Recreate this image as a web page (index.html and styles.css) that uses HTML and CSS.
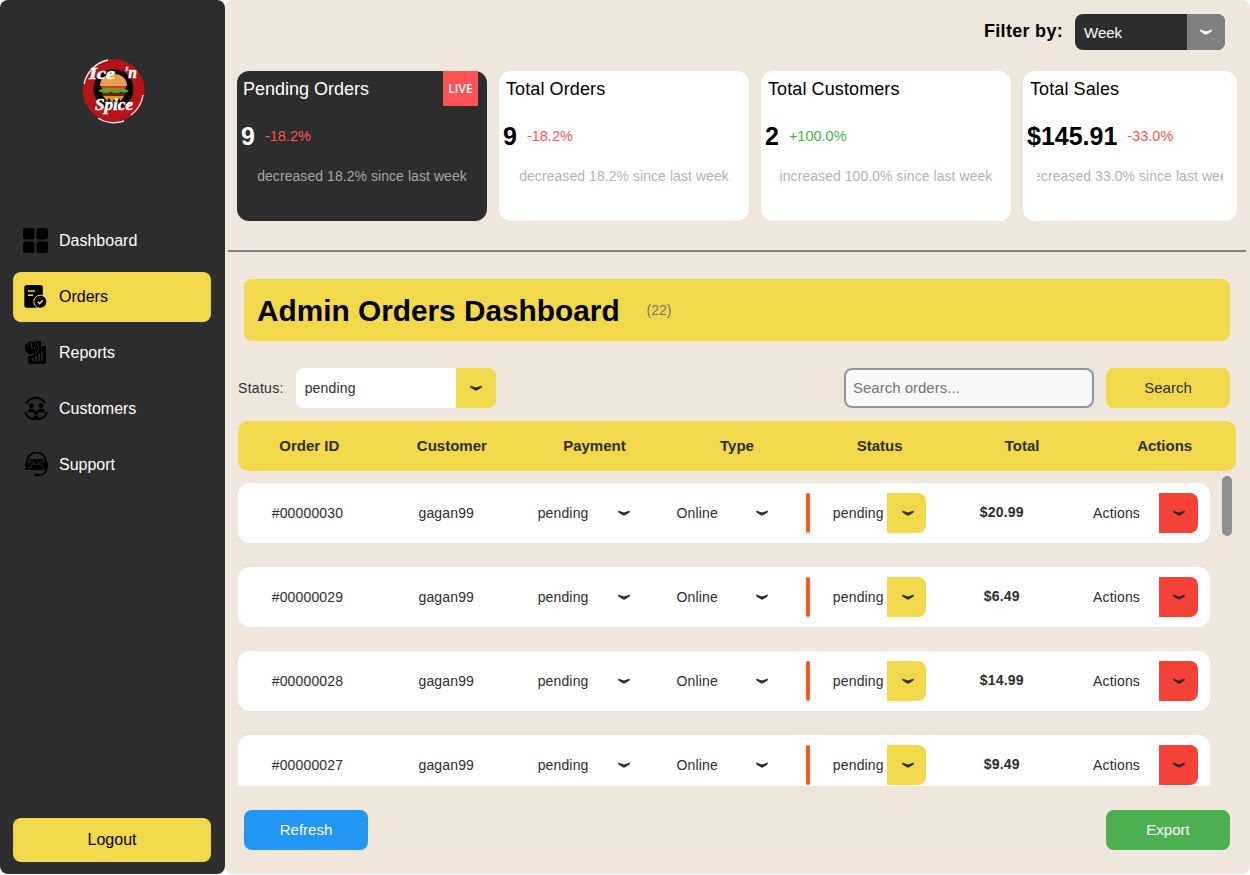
FILE: index.html
```html
<!DOCTYPE html>
<html lang="en">

<head>
  <meta charset="UTF-8">
  <title>Admin Orders Dashboard</title>
  <link rel="stylesheet" href="styles.css">
</head>

<body>
  <svg class="svg-defs" width="0" height="0">
    <symbol id="chevron" viewBox="0 0 12 6">
      <path d="M0 .4 6 2.400 12 .4 11.600 2.400 6.800 5.600H5.200L.4 2.400Z" />
    </symbol>
  </svg>

  <div class="app">
    <!-- Sidebar -->
    <aside class="sidebar">
      <div class="logo">
        <svg width="70" height="70" viewBox="79 55 70 70">
          <circle cx="113.7" cy="90.3" r="31" fill="#b81416" />
          <path d="M131 115a31 31 0 0 0 12-20M98 118a31 31 0 0 0 26 3M84 84a31 31 0 0 1 24-24" fill="none" stroke="#f3e4e4" stroke-width="1.400" />
          <circle cx="113.5" cy="89" r="20" fill="#050505" />
          <path d="M100 86c0-8 6-12 13.500-12S127 78 127 86Z" fill="#e8a04c" />
          <rect x="101" y="86" width="25" height="2" rx="1" fill="#d8342a" />
          <path d="M98 91l5-3h21l5 3-4 2-4-1-5 2-5-2-5 2Z" fill="#6e9a2c" />
          <rect x="102" y="93" width="23" height="3" rx="1" fill="#5a2a18" />
          <path d="M103 96h21l-3 5-2-3-2 5-3-4-2 4-3-5-2 3Z" fill="#e8901c" />
          <text x="89" y="79" class="logo-text" textLength="26" lengthAdjust="spacingAndGlyphs">Ice</text>
          <text x="124" y="78" class="logo-text" textLength="13" lengthAdjust="spacingAndGlyphs">'n</text>
          <text x="95" y="110" class="logo-text" textLength="38" lengthAdjust="spacingAndGlyphs">Spice</text>
        </svg>
      </div>

      <nav class="nav">
        <a class="nav-item" href="#">
          <svg class="nav-icon" width="26" height="26" viewBox="0 0 26 26">
            <rect x="0" y="0" width="11.500" height="11.500" rx="2.500" />
            <rect x="13.500" y="0" width="11.500" height="11.500" rx="2.500" />
            <rect x="0" y="13.500" width="11.500" height="11.500" rx="2.500" />
            <rect x="13.500" y="13.500" width="11.500" height="11.500" rx="2.500" />
          </svg>
          Dashboard
        </a>
        <a class="nav-item active" href="#">
          <svg class="nav-icon" width="26" height="26" viewBox="0 0 26 26">
            <rect x="1.300" y="1" width="18.500" height="22.700" rx="2.500" />
            <rect x="5" y="6.300" width="7" height="1.500" fill="#f2d84b" />
            <rect x="5" y="10.500" width="5" height="1.500" fill="#f2d84b" />
            <circle cx="17.300" cy="17.700" r="6.500" fill="#000" stroke="#f2d84b" stroke-width="1" />
            <path d="M14.800 17.700l1.900 1.900 3.100-3.300" fill="none" stroke="#f2d84b" stroke-width="1.500" />
          </svg>
          Orders
        </a>
        <a class="nav-item" href="#">
          <svg class="nav-icon" width="26" height="26" viewBox="0 0 26 26">
            <path d="M9 1h9l5 5v16a2 2 0 0 1-2 2H7a2 2 0 0 1-2-2v-6h4Z" />
            <path d="M18 1v5h5Z" fill="#2d2d2d" />
            <circle cx="8.500" cy="8" r="7" fill="#000" stroke="#2d2d2d" stroke-width="1" />
            <path d="M8.500 3v5h5" fill="none" stroke="#2d2d2d" stroke-width="1" />
            <path d="M10 21v-3M13 21v-5M16 21v-7M19 21v-9" stroke="#2d2d2d" stroke-width="1.500" />
          </svg>
          Reports
        </a>
        <a class="nav-item" href="#">
          <svg class="nav-icon" width="26" height="26" viewBox="0 0 26 26">
            <path d="M3 8a11 11 0 0 1 19-1M24 16a11 11 0 0 1-7 7M10 23a11 11 0 0 1-8-7" fill="none" stroke="#000"
              stroke-width="2" />
            <circle cx="8.500" cy="9.500" r="2.500" />
            <circle cx="18" cy="9.500" r="2.500" />
            <path d="M4.500 16.500c0-3 1.500-4 4-4s3.500 1 3.500 4ZM14.500 16.500c0-3 1-4 3.500-4s4 1 4 4Z" />
            <circle cx="13.200" cy="17" r="2.400" />
            <path d="M9.500 24c0-3 1.500-4.300 3.700-4.300s3.800 1.300 3.800 4.300Z" />
          </svg>
          Customers
        </a>
        <a class="nav-item" href="#">
          <svg class="nav-icon" width="26" height="26" viewBox="0 0 26 26">
            <path d="M4 12V10a9.500 9.500 0 0 1 19 0v2" fill="none" stroke="#000" stroke-width="2" />
            <rect x="2" y="10" width="4" height="8" rx="2" />
            <rect x="21" y="10" width="4" height="8" rx="2" />
            <path d="M6 7h15v11H6Z" />
            <path d="M6 8l7.500 5L21 8M6 17l5-5.500M21 17l-5-5.500" fill="none" stroke="#2d2d2d" stroke-width="1" />
            <path d="M23 18c0 4-3 5-8 5" fill="none" stroke="#000" stroke-width="1.600" />
            <rect x="11" y="21.500" width="5" height="2.800" rx="1.400" />
          </svg>
          Support
        </a>
      </nav>

      <button class="logout-btn">Logout</button>
    </aside>

    <main class="main">
      <div class="filter-bar">
        <span class="filter-label">Filter by:</span>
        <div class="picker picker-dark">
          <span class="picker-text">Week</span>
          <span class="picker-arrow"><svg class="chevron"><use href="#chevron" /></svg></span>
        </div>
      </div>

      <!-- Stat cards -->
      <section class="cards">
        <div class="card card-live">
          <span class="live-badge">LIVE</span>
          <div class="card-title">Pending Orders</div>
          <div class="card-value-row"><span class="card-value">9</span><span class="change down">-18.2%</span></div>
          <div class="card-desc"><span>decreased 18.2% since last week</span></div>
        </div>
        <div class="card">
          <div class="card-title">Total Orders</div>
          <div class="card-value-row"><span class="card-value">9</span><span class="change down">-18.2%</span></div>
          <div class="card-desc"><span>decreased 18.2% since last week</span></div>
        </div>
        <div class="card">
          <div class="card-title">Total Customers</div>
          <div class="card-value-row"><span class="card-value">2</span><span class="change up">+100.0%</span></div>
          <div class="card-desc"><span>increased 100.0% since last week</span></div>
        </div>
        <div class="card card-last">
          <div class="card-title">Total Sales</div>
          <div class="card-value-row"><span class="card-value">$145.91</span><span class="change down">-33.0%</span></div>
          <div class="card-desc"><span>decreased 33.0% since last week</span></div>
        </div>
      </section>

      <hr class="divider">

      <div class="banner">
        <h1>Admin Orders Dashboard</h1>
        <span class="banner-count">(22)</span>
      </div>

      <div class="toolbar">
        <span class="toolbar-label">Status:</span>
        <div class="picker picker-status">
          <span class="picker-text">pending</span>
          <span class="picker-arrow"><svg class="chevron"><use href="#chevron" /></svg></span>
        </div>
        <input class="search-input" type="text" placeholder="Search orders...">
        <button class="btn btn-yellow">Search</button>
      </div>

      <!-- Orders table -->
      <div class="table-head">
        <div>Order ID</div>
        <div>Customer</div>
        <div>Payment</div>
        <div>Type</div>
        <div>Status</div>
        <div>Total</div>
        <div>Actions</div>
      </div>

      <div class="table-scroll">
        <div class="scroll-thumb"></div>
        <div class="table-body">
          <div class="order-row">
            <div class="cell">#00000030</div>
            <div class="cell">gagan99</div>
            <div class="cell"><div class="row-picker"><span>pending</span><span class="row-arrow"><svg class="chevron"><use href="#chevron" /></svg></span></div></div>
            <div class="cell"><div class="row-picker"><span>Online</span><span class="row-arrow"><svg class="chevron"><use href="#chevron" /></svg></span></div></div>
            <div class="cell"><div class="row-picker status-picker"><span>pending</span><span class="row-arrow"><svg class="chevron"><use href="#chevron" /></svg></span></div></div>
            <div class="cell total">$20.99</div>
            <div class="cell"><div class="row-picker action-picker"><span>Actions</span><span class="row-arrow"><svg class="chevron"><use href="#chevron" /></svg></span></div></div>
          </div>
          <div class="order-row">
            <div class="cell">#00000029</div>
            <div class="cell">gagan99</div>
            <div class="cell"><div class="row-picker"><span>pending</span><span class="row-arrow"><svg class="chevron"><use href="#chevron" /></svg></span></div></div>
            <div class="cell"><div class="row-picker"><span>Online</span><span class="row-arrow"><svg class="chevron"><use href="#chevron" /></svg></span></div></div>
            <div class="cell"><div class="row-picker status-picker"><span>pending</span><span class="row-arrow"><svg class="chevron"><use href="#chevron" /></svg></span></div></div>
            <div class="cell total">$6.49</div>
            <div class="cell"><div class="row-picker action-picker"><span>Actions</span><span class="row-arrow"><svg class="chevron"><use href="#chevron" /></svg></span></div></div>
          </div>
          <div class="order-row">
            <div class="cell">#00000028</div>
            <div class="cell">gagan99</div>
            <div class="cell"><div class="row-picker"><span>pending</span><span class="row-arrow"><svg class="chevron"><use href="#chevron" /></svg></span></div></div>
            <div class="cell"><div class="row-picker"><span>Online</span><span class="row-arrow"><svg class="chevron"><use href="#chevron" /></svg></span></div></div>
            <div class="cell"><div class="row-picker status-picker"><span>pending</span><span class="row-arrow"><svg class="chevron"><use href="#chevron" /></svg></span></div></div>
            <div class="cell total">$14.99</div>
            <div class="cell"><div class="row-picker action-picker"><span>Actions</span><span class="row-arrow"><svg class="chevron"><use href="#chevron" /></svg></span></div></div>
          </div>
          <div class="order-row">
            <div class="cell">#00000027</div>
            <div class="cell">gagan99</div>
            <div class="cell"><div class="row-picker"><span>pending</span><span class="row-arrow"><svg class="chevron"><use href="#chevron" /></svg></span></div></div>
            <div class="cell"><div class="row-picker"><span>Online</span><span class="row-arrow"><svg class="chevron"><use href="#chevron" /></svg></span></div></div>
            <div class="cell"><div class="row-picker status-picker"><span>pending</span><span class="row-arrow"><svg class="chevron"><use href="#chevron" /></svg></span></div></div>
            <div class="cell total">$9.49</div>
            <div class="cell"><div class="row-picker action-picker"><span>Actions</span><span class="row-arrow"><svg class="chevron"><use href="#chevron" /></svg></span></div></div>
          </div>
        </div>
      </div>

      <div class="footer-actions">
        <button class="btn btn-blue">Refresh</button>
        <button class="btn btn-green">Export</button>
      </div>
    </main>
  </div>
</body>

</html>
```

FILE: styles.css
```css
* {
  box-sizing: border-box;
}

body {
  font-family: "Liberation Sans", Arial, sans-serif;
  margin: 0;
  padding: 0;
  background-color: #fff;
  color: #2d2d2d;
  overflow: hidden;
}

.svg-defs {
  position: absolute;
}

.app {
  display: flex;
  height: 874px;
}

/* Sidebar */
.sidebar {
  width: 225px;
  flex: none;
  display: flex;
  flex-direction: column;
  background-color: #2d2d2d;
  border-radius: 8px;
  padding: 0 13px 12px 13px;
}

.logo {
  height: 216px;
  padding: 55px 0 0 66px;
}

.logo-text {
  font-family: "Liberation Serif", serif;
  font-size: 16px;
  font-weight: bold;
  font-style: italic;
  fill: #fff;
  stroke: #fff;
  stroke-width: .5px;
}

.nav {
  display: flex;
  flex-direction: column;
  gap: 6px;
  flex: 1;
}

.nav-item {
  display: flex;
  align-items: center;
  gap: 10px;
  height: 50px;
  width: 198px;
  padding-left: 10px;
  border-radius: 8px;
  color: #fff;
  font-size: 16px;
  text-decoration: none;
}

.nav-item.active {
  background-color: #f2d84b;
  color: #000;
}

.logout-btn {
  height: 44px;
  width: 198px;
  background-color: #f2d84b;
  border: none;
  border-radius: 8px;
  color: #000;
  font-family: inherit;
  font-size: 16px;
}

/* Main */
.main {
  flex: 1;
  min-width: 0;
  background-color: #efe6dc;
  border-radius: 8px;
  padding: 14px 0 0 12px;
}

.filter-bar {
  display: flex;
  justify-content: flex-end;
  align-items: center;
  gap: 12px;
  height: 36px;
  padding-right: 25px;
}

.filter-label {
  font-size: 18px;
  font-weight: bold;
  letter-spacing: .3px;
  color: #000;
  margin-top: -2px;
}

.picker {
  display: flex;
  border-radius: 8px;
  overflow: hidden;
  font-size: 14px;
}

.picker-text {
  flex: 1;
  padding-left: 9px;
  align-self: center;
}

.picker-arrow {
  width: 38px;
  display: flex;
  align-items: center;
  justify-content: center;
}

.picker-dark {
  width: 150px;
  height: 36px;
  background-color: #2d2d2d;
  color: #fff;
  font-size: 15px;
}

.picker-dark .picker-arrow {
  background-color: #808080;
}

.picker-status {
  width: 200px;
  height: 40px;
  margin-left: 12px;
  background-color: #fff;
  color: #2d2d2d;
  letter-spacing: .15px;
}

.picker-status .picker-arrow {
  width: 40px;
  background-color: #f2d84b;
}

.chevron {
  width: 12px;
  height: 6px;
  fill: #2d2d2d;
}

.picker-dark .chevron {
  fill: #fff;
}

/* Stat cards */
.cards {
  display: flex;
  gap: 12px;
  width: 1000px;
  margin-top: 21px;
}

.card {
  position: relative;
  flex: none;
  width: 250px;
  height: 150px;
  padding: 8px 14px 0 14px;
  background-color: #fff;
  border-radius: 12px;
  color: #000;
}

.card-last {
  flex: 1;
  width: auto;
  min-width: 0;
}

.card-live {
  background-color: #2d2d2d;
  color: #fff;
}

.live-badge {
  position: absolute;
  top: 0;
  right: 9px;
  width: 35px;
  height: 35px;
  display: flex;
  align-items: center;
  justify-content: center;
  background-color: #ff5252;
  color: #fff;
  font-family: "Open Sans", sans-serif;
  font-size: 12px;
  font-weight: 600;
}

.card-title {
  font-size: 18px;
  line-height: 20px;
  margin-left: -7px;
  letter-spacing: .1px;
}

.card-live .card-title {
  margin-left: -8px;
  letter-spacing: 0;
}

.card-value-row {
  display: flex;
  align-items: center;
  height: 28px;
  margin: 23px 0 0 -10px;
  gap: 10px;
}

.card-value {
  font-size: 25px;
  font-weight: bold;
}

.change {
  font-size: 14.5px;
}

.change.down {
  color: #ff5252;
}

.change.up {
  color: #4caf50;
}

.card-desc {
  display: flex;
  justify-content: center;
  margin-top: 18px;
  overflow: hidden;
  white-space: nowrap;
  font-size: 14px;
  letter-spacing: .06px;
  line-height: 16px;
  color: #b3b3b3;
}

.card-live .card-desc {
  color: #a6a6a6;
}

.divider {
  height: 2px;
  width: 1018px;
  margin: 29px 0 0 -9px;
  border: none;
  background-color: #8a8080;
}

.banner {
  display: flex;
  align-items: center;
  width: 986px;
  height: 62px;
  margin: 27px 0 0 7px;
  padding-left: 13px;
  background-color: #f2d84b;
  border-radius: 8px;
}

.banner h1 {
  margin: 0;
  padding-top: 2px;
  font-size: 29.8px;
  color: #000;
}

.banner-count {
  margin-left: 27px;
  font-size: 14px;
  color: #777;
}

.toolbar {
  display: flex;
  align-items: center;
  width: 992px;
  height: 40px;
  margin: 27px 0 0 1px;
}

.toolbar-label {
  font-size: 14px;
  letter-spacing: .3px;
}

.search-input {
  width: 250px;
  height: 40px;
  margin-left: auto;
  padding: 0 7px 2px 7px;
  background-color: #f8f8f8;
  border: 2px solid #8e969c;
  border-radius: 8px;
  font-family: inherit;
  font-size: 15px;
}

.btn {
  width: 124px;
  height: 40px;
  padding-bottom: 3px;
  border: none;
  border-radius: 8px;
  font-family: inherit;
  font-size: 15px;
}

.btn-yellow {
  margin-left: 12px;
  background-color: #f2d84b;
  color: #2d2d2d;
}

.btn-blue {
  background-color: #2196f3;
  color: #fff;
}

.btn-green {
  background-color: #4caf50;
  color: #fff;
}

/* Table */
.table-head {
  display: grid;
  grid-template-columns: repeat(7, 1fr);
  align-items: center;
  width: 998px;
  height: 50px;
  margin: 13px 0 0 1px;
  padding-bottom: 2px;
  background-color: #f2d84b;
  border-radius: 10px;
  font-size: 15px;
  font-weight: bold;
  text-align: center;
}

.table-scroll {
  position: relative;
  width: 994px;
  height: 315px;
  margin-left: 1px;
  padding-right: 22px;
  overflow: hidden;
}

.scroll-thumb {
  position: absolute;
  top: 5px;
  right: 0;
  width: 10px;
  height: 60px;
  border-radius: 5px;
  background-color: #8f8f8f;
}

.table-body {
  display: flex;
  flex-direction: column;
  gap: 24px;
  padding-top: 12px;
}

.order-row {
  display: grid;
  grid-template-columns: repeat(7, 1fr);
  flex: none;
  height: 60px;
  background-color: #fff;
  border-radius: 12px;
  font-size: 14px;
  letter-spacing: .15px;
}

.cell {
  display: flex;
  align-items: center;
  justify-content: center;
}

.total {
  font-weight: bold;
  padding-bottom: 2px;
}

.row-picker {
  display: flex;
  align-items: center;
  justify-content: space-between;
  width: 115px;
  height: 40px;
  padding-left: 10px;
}

.row-arrow {
  width: 39px;
  height: 40px;
  padding-left: 1px;
  display: flex;
  align-items: center;
  justify-content: center;
  border-radius: 0 8px 8px 0;
}

.status-picker {
  position: relative;
  width: 120px;
  margin-left: 6px;
  padding-left: 27px;
}

.status-picker::before {
  content: "";
  position: absolute;
  left: 0;
  top: 0;
  width: 4px;
  height: 40px;
  border-radius: 2px;
  background-color: #ff5722;
}

.status-picker .row-arrow {
  padding-left: 3px;
  background-color: #f2d84b;
}

.action-picker .row-arrow {
  background-color: #f44336;
}

.footer-actions {
  display: flex;
  justify-content: space-between;
  width: 986px;
  margin: 24px 0 0 7px;
}
```
